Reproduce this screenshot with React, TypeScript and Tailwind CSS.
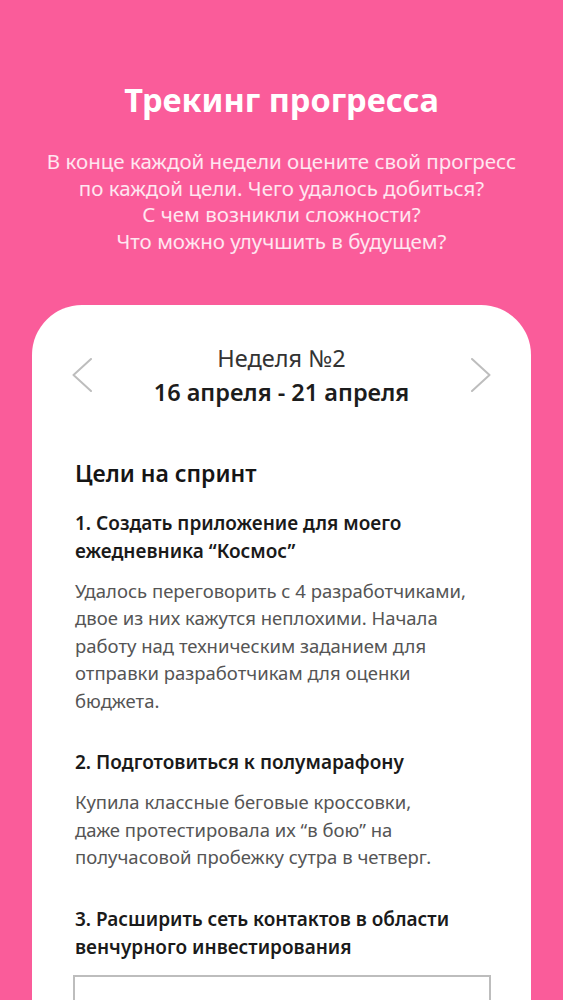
type Goal = {
  title: string[];
  note?: string[];
};

const GOALS: Goal[] = [
  {
    title: ['1. Создать приложение для моего', 'ежедневника “Космос”'],
    note: [
      'Удалось переговорить с 4 разработчиками,',
      'двое из них кажутся неплохими. Начала',
      'работу над техническим заданием для',
      'отправки разработчикам для оценки',
      'бюджета.',
    ],
  },
  {
    title: ['2. Подготовиться к полумарафону'],
    note: [
      'Купила классные беговые кроссовки,',
      'даже протестировала их “в бою” на',
      'получасовой пробежку сутра в четверг.',
    ],
  },
  {
    title: ['3. Расширить сеть контактов в области', 'венчурного инвестирования'],
  },
];

function Chevron({ dir }: { dir: 'left' | 'right' }) {
  return (
    <svg width="20" height="34" viewBox="0 0 20 34" fill="none" className="shrink-0">
      <path
        d={dir === 'left' ? 'M19 1 L1.5 17 L19 33' : 'M1 1 L18.5 17 L1 33'}
        stroke="#bdbdbd"
        strokeWidth="2"
        strokeLinecap="round"
        strokeLinejoin="round"
      />
    </svg>
  );
}

export default function App() {
  return (
    <div
      className="h-screen bg-[#fa5c9a] overflow-hidden flex flex-col items-center"
      style={{ fontFamily: '"Noto Sans", "Open Sans", sans-serif' }}
    >
      {/* Header */}
      <h1 className="mt-[78px] text-[32.5px] leading-[44px] font-bold text-white">
        Трекинг прогресса
      </h1>
      <p className="mt-[26px] text-center text-[20.5px] leading-[26.7px] text-white/85">
        В конце каждой недели оцените свой прогресс
        <br />
        по каждой цели. Чего удалось добиться?
        <br />
        С чем возникли сложности?
        <br />
        Что можно улучшить в будущем?
      </p>

      {/* Card */}
      <div className="mt-[50px] w-[499px] self-start ml-[32px] bg-white rounded-t-[50px] flex-1 px-[43px] pt-[36px]">
        <div className="flex items-center justify-between -mx-[3px]">
          <Chevron dir="left" />
          <div className="text-center">
            <div className="text-[23.5px] leading-[34px] text-[#333]">Неделя №2</div>
            <div className="text-[23.5px] leading-[34px] font-semibold text-[#1c1c1c]">
              16 апреля - 21 апреля
            </div>
          </div>
          <Chevron dir="right" />
        </div>

        <h2 className="mt-[48px] text-[23px] leading-[32px] font-semibold text-[#151515]">
          Цели на спринт
        </h2>

        <div className="mt-[20px] flex flex-col gap-[34px]">
          {GOALS.map((g, i) => (
            <div key={i}>
              <div className="text-[19px] leading-[28px] font-semibold text-[#1a1a1a]">
                {g.title.map((t, j) => (
                  <div key={j}>{t}</div>
                ))}
              </div>
              {g.note && (
                <div className="mt-[12px] text-[18.5px] leading-[27.5px] text-[#555]">
                  {g.note.map((t, j) => (
                    <div key={j}>{t}</div>
                  ))}
                </div>
              )}
            </div>
          ))}
        </div>

        <div className="mt-[14px] -ml-[2px] w-[418px] h-[80px] border-2 border-[#bdbdbd]" />
      </div>
    </div>
  );
}
